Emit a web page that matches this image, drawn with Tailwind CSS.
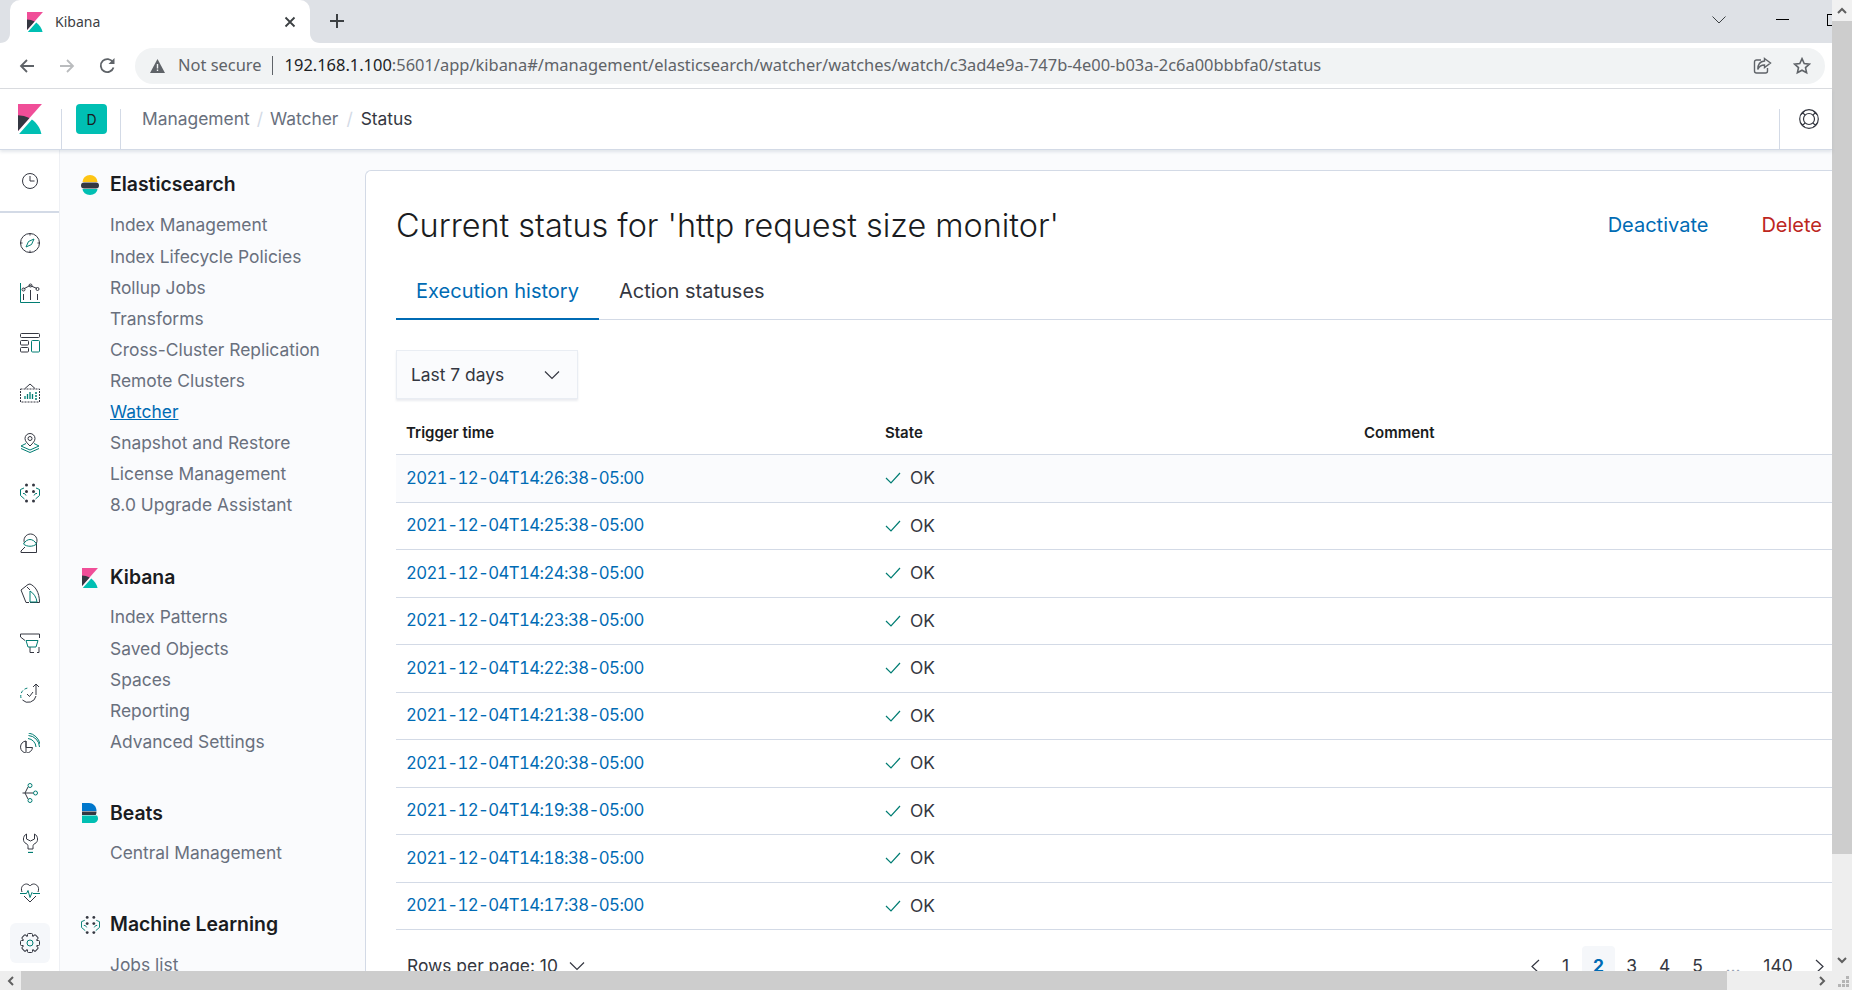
<!DOCTYPE html>
<html lang="en">
<head>
    <meta charset="UTF-8">
    <meta name="viewport" content="width=device-width, initial-scale=1.0">
    <title>Kibana</title>
    <script src="https://cdn.jsdelivr.net/npm/@tailwindcss/browser@4"></script>
</head>
<body class="h-screen overflow-hidden bg-white flex flex-col [font-family:Inter,sans-serif]">
    <div class="flex-1 min-h-0 flex">
        <div class="flex-1 min-w-0 flex flex-col">
            <!-- browser tabs -->
            <div class="h-[43px] shrink-0 bg-[#dee1e6] flex items-end [font-family:'Noto_Sans',sans-serif]">
                <svg class="w-[10px] h-[10px] shrink-0" viewBox="0 0 10 10"><path fill="#fff" d="M0 10C6 10 10 6 10 0V10Z"/></svg>
                <div class="w-[300px] h-[43px] shrink-0 bg-white rounded-t-[10px] flex items-center pl-[17px] pr-[13px]">
                    <svg class="w-[16px] h-[20px]" viewBox="4 0 25 32" preserveAspectRatio="none"><path fill="#F04E98" d="M4 0v28.789L28.935.017z"/><path fill="#343741" d="M4 12v16.789l11.906-13.738A24.721 24.721 0 0 0 4 12"/><path fill="#00BFB3" d="M18.479 16.664L6.268 30.754l-1.073 1.237h23.191c-1.252-6.292-4.883-11.719-9.908-15.327"/></svg>
                    <span class="ml-3 text-[14px] text-[#3c4043]">Kibana</span>
                    <svg class="ml-auto w-[14px] h-[14px]" viewBox="0 0 14 14" fill="none" stroke="#3c4043" stroke-width="1.8"><path d="M2.500 2.500l9 9M11.500 2.500l-9 9"/></svg>
                </div>
                <svg class="w-[10px] h-[10px] shrink-0" viewBox="0 0 10 10"><path fill="#fff" d="M10 10C4 10 0 6 0 0V10Z"/></svg>
                <svg class="ml-[9px] mb-[14px] w-[16px] h-[16px]" viewBox="0 0 16 16" fill="none" stroke="#3c4043" stroke-width="2"><path d="M8 1v14M1 8h14"/></svg>
                <div class="ml-auto h-full flex items-center">
                    <svg class="w-[14px] h-[8px] mb-1" viewBox="0 0 14 8" fill="none" stroke="#3c4043"><path d="M.5.5L7 7 13.500.5"/></svg>
                    <div class="ml-[50px] w-[13px] h-px bg-black mb-1"></div>
                    <div class="ml-[38px] w-[5px] h-[12px] border-l border-t border-b border-black mb-1"></div>
                </div>
            </div>
            <!-- browser toolbar -->
            <div class="h-[46px] shrink-0 bg-white border-b border-[#dadce0] flex items-center [font-family:'Noto_Sans',sans-serif]">
                <div class="w-[135px] shrink-0 flex items-center">
                    <svg class="ml-[19px] w-[16px] h-[16px]" viewBox="0 0 16 16" fill="none" stroke="#5f6368" stroke-width="1.8"><path d="M15 8H2M8 2L2 8l6 6"/></svg>
                    <svg class="ml-[24px] w-[16px] h-[16px]" viewBox="0 0 16 16" fill="none" stroke="#babcbe" stroke-width="1.8"><path d="M1 8h13M8 2l6 6-6 6"/></svg>
                    <svg class="ml-[24px] w-[17px] h-[17px]" viewBox="0 0 17 17" fill="none" stroke="#5f6368" stroke-width="1.8"><path d="M14.500 10.500a6.500 6.500 0 1 1-.6-5.200"/><path fill="#5f6368" stroke="none" d="M15.500 1v6h-6z"/></svg>
                </div>
                <div class="w-[1690px] h-[36px] bg-[#f1f3f4] rounded-full flex items-center text-[16.45px] pl-[15px] pr-[14px]">
                    <svg class="w-[15px] h-[14px] shrink-0" viewBox="0 0 15 14"><path fill="#5f6368" d="M7.500 0L15 14H0z"/><path stroke="#f1f3f4" stroke-width="1.400" d="M7.500 5v4.500M7.500 10.500V12"/></svg>
                    <span class="ml-[13px] text-[#5f6368]">Not secure</span>
                    <span class="ml-[10px] w-px h-[19px] bg-[#5f6368]"></span>
                    <span class="ml-[12px] text-[#202124]">192.168.1.100<span class="text-[#5f6368]">:5601/app/kibana#/management/elasticsearch/watcher/watches/watch/c3ad4e9a-747b-4e00-b03a-2c6a00bbbfa0/status</span></span>
                    <svg class="ml-auto w-[19px] h-[18px]" viewBox="0 0 19 18" fill="none" stroke="#5f6368" stroke-width="1.400"><path d="M8 3H3.500A2 2 0 0 0 1.500 5v9a2 2 0 0 0 2 2h9a2 2 0 0 0 2-2v-3"/><path d="M11.500 1.500L17.500 6l-6 4.500V8C8 8 6 9.500 4.800 12.500 4.800 8 7 4.300 11.500 4z"/></svg>
                    <svg class="ml-[21px] w-[18px] h-[18px]" viewBox="0 0 18 18" fill="none" stroke="#5f6368" stroke-width="1.600"><path d="M9 1.700l2.200 4.800 5.200.6-3.900 3.500 1.100 5.200L9 13.200l-4.600 2.600 1.100-5.200-3.900-3.500 5.200-.6z"/></svg>
                </div>
            </div>
            <!-- kibana header -->
            <div class="relative z-10 h-[61px] shrink-0 bg-white border-b border-[#d3dae6] shadow-[0_2px_3px_rgba(152,162,179,0.25)] flex">
                <div class="w-[61px] shrink-0 flex pl-[18px] pt-[15px]">
                    <svg class="w-[24px] h-[30px]" viewBox="4 0 25 32" preserveAspectRatio="none"><path fill="#F04E98" d="M4 0v28.789L28.935.017z"/><path fill="#343741" d="M4 12v16.789l11.906-13.738A24.721 24.721 0 0 0 4 12"/><path fill="#00BFB3" d="M18.479 16.664L6.268 30.754l-1.073 1.237h23.191c-1.252-6.292-4.883-11.719-9.908-15.327"/></svg>
                </div>
                <div class="mt-[20px] w-[60px] shrink-0 border-l border-r border-[#d3dae6] relative">
                    <div class="absolute left-[14px] -top-[5px] w-[31px] h-[30px] bg-[#00bfb3] rounded-[4px] flex items-center justify-center text-[14px] text-[#1a1c21]">D</div>
                </div>
                <div class="ml-[21px] flex items-center text-[17.4px] text-[#69707d]">
                    <span>Management</span><span class="mx-[7px] text-[#d3dae6]">/</span><span>Watcher</span><span class="mx-[8px] text-[#d3dae6]">/</span><span class="text-[#343741]">Status</span>
                </div>
                <div class="ml-auto mt-[20px] w-[53px] border-l border-[#d3dae6] relative">
                    <svg class="absolute left-[19px] top-0 w-[20px] h-[20px]" viewBox="0 0 20 20" fill="none" stroke="#343741" stroke-width="1.200"><circle cx="10" cy="10" r="9.300"/><circle cx="10" cy="10" r="5.500"/><path d="M3.500 3.500l2.600 2.600M16.500 3.500l-2.600 2.600M3.500 16.500l2.600-2.600M16.500 16.500l-2.600-2.600M5.500 2l-3.500 3.500M14.500 2l3.500 3.500M5.500 18l-3.500-3.500M14.500 18l3.500-3.500"/></svg>
                </div>
            </div>
            <!-- kibana body -->
            <div class="flex-1 min-h-0 flex overflow-hidden">
                <nav class="w-[60px] shrink-0 bg-white border-r border-[#eef0f4] flex flex-col items-center">
                    <div class="w-full h-[63px] shrink-0 flex items-center justify-center border-b-2 border-[#d3dae6]">
                        <svg class="w-5 h-5" viewBox="0 0 20 20" fill="none" stroke="#343741"><circle cx="10" cy="10" r="7.500"/><path d="M10 5v5h4.500"/></svg>
                    </div>
                    <div class="pt-[5px] flex flex-col w-full">
                        <div class="h-[50px] flex items-center justify-center">
                            <svg class="w-5 h-5" viewBox="0 0 20 20" fill="none" stroke="#343741"><circle cx="10" cy="10" r="9.500"/><path d="M10 .5v2M10 17.500v2M.5 10h2M17.500 10h2"/><path stroke="#017d73" d="M14 6l-2.500 5.500L6 14l2.500-5.500z"/></svg>
                        </div>
                        <div class="h-[50px] flex items-center justify-center">
                            <svg class="w-5 h-5" viewBox="0 0 20 20" fill="none" stroke="#343741"><path stroke="#017d73" d="M.5 0v19.500H20"/><path d="M3.500 6L10 2.500 17 5.500"/><circle cx="3.500" cy="6.500" r="1.500"/><circle cx="10.500" cy="2.500" r="1.500"/><circle cx="17.500" cy="6" r="1.500"/><path d="M3.500 11v6M10.500 7v10M17.500 11v6"/></svg>
                        </div>
                        <div class="h-[50px] flex items-center justify-center">
                            <svg class="w-5 h-5" viewBox="0 0 20 20" fill="none" stroke="#343741"><rect x=".5" y=".5" width="19" height="4" rx="1"/><rect x=".5" y="7.500" width="8" height="4.500" rx="1"/><rect x=".5" y="14.500" width="8" height="4.500" rx="1"/><rect x="11.500" y="7.500" width="8" height="11.500" rx="1" stroke="#017d73"/></svg>
                        </div>
                        <div class="h-[50px] flex items-center justify-center">
                            <svg class="w-5 h-5" viewBox="0 0 20 20" fill="none" stroke="#343741"><path stroke-dasharray="2 1" d="M.5 6h19v13H.5z"/><path d="M5 5.500L10 1l5 4.500"/><path stroke="#017d73" stroke-width="1.300" d="M5 16v-3M7.500 16v-5M10 16v-7M12.500 16v-5M15 10h2M15 13h2M15 16h2"/></svg>
                        </div>
                        <div class="h-[50px] flex items-center justify-center">
                            <svg class="w-5 h-5" viewBox="0 0 20 20" fill="none" stroke="#343741"><path d="M10 13C7 10 5 8 5 5.500a5 5 0 0 1 10 0C15 8 13 10 10 13z"/><circle cx="10" cy="5.500" r="2"/><path stroke="#017d73" d="M6 10.500L1 13l9 4 9-4-5-2.500M1 15.500l9 4 9-4"/></svg>
                        </div>
                        <div class="h-[50px] flex items-center justify-center">
                            <svg class="w-5 h-5" viewBox="0 0 20 20" fill="#343741"><circle cx="6.500" cy="2" r="1.500"/><circle cx="13.500" cy="2" r="1.500"/><circle cx="6.500" cy="8.500" r="1.500"/><circle cx="13.500" cy="8.500" r="1.500"/><circle cx="6.500" cy="18" r="1.500"/><circle cx="13.500" cy="18" r="1.500"/><path fill="none" stroke="#017d73" d="M4 5L.5 6.500v6l4 3.500M3 10.500h1.500l1.500 2M16 5l3.500 1.500v6l-4 3.500M17 10.500h-1.500l-1.500 2"/></svg>
                        </div>
                        <div class="h-[50px] flex items-center justify-center">
                            <svg class="w-5 h-5" viewBox="0 0 20 20" fill="none" stroke="#343741"><path d="M4.500 10a6.500 6.500 0 1 1 12 0v9.500H1v-1.500l4-4"/><path stroke="#017d73" d="M3.500 11C7 5 13 5 16.500 11 13 14 7 14 3.500 11z"/></svg>
                        </div>
                        <div class="h-[50px] flex items-center justify-center">
                            <svg class="w-5 h-5" viewBox="0 0 20 20" fill="none" stroke="#343741"><path d="M1 7l7-5.500 2-.5c5 2 9.500 8 9.500 18.500H10M1 7l5 12.500h3M7 4l3 3"/><path stroke="#017d73" d="M10 8v11h7C16.500 14.500 14 10.500 10 8z"/></svg>
                        </div>
                        <div class="h-[50px] flex items-center justify-center">
                            <svg class="w-5 h-5" viewBox="0 0 20 20" fill="none" stroke="#343741"><path d="M5 7.500L.5 4V1h19v4M10 14v5.500h4M19 14v5.500h-2"/><path stroke="#017d73" d="M6 7.500h12L16 14H8z"/></svg>
                        </div>
                        <div class="h-[50px] flex items-center justify-center">
                            <svg class="w-5 h-5" viewBox="0 0 20 20" fill="none" stroke="#343741"><path d="M16 13a8 8 0 0 1-13.500 4"/><path stroke="#017d73" stroke-dasharray="3 2" d="M1 15A8 8 0 0 1 9 5"/><path d="M7 11l2.500 2.500L13 9M16 12V1M13 4l3-3 3 3"/></svg>
                        </div>
                        <div class="h-[50px] flex items-center justify-center">
                            <svg class="w-5 h-5" viewBox="0 0 20 20" fill="none" stroke="#343741"><path d="M6 8A6 6 0 1 0 12.500 14.500H6z"/><path d="M6 8v11"/><path stroke="#017d73" d="M8 5.500a9 9 0 0 1 8 8.500M8.500 2.500A12 12 0 0 1 19.500 14M8.500 0A14 14 0 0 1 20 11"/></svg>
                        </div>
                        <div class="h-[50px] flex items-center justify-center">
                            <svg class="w-5 h-5" viewBox="0 0 20 20" fill="none" stroke="#017d73"><circle cx="10" cy="2.500" r="2"/><circle cx="15.500" cy="10" r="2"/><circle cx="10" cy="17.500" r="2"/><path stroke="#343741" d="M2.500 10h10.500M5 10l3-6M5 10l3 6"/></svg>
                        </div>
                        <div class="h-[50px] flex items-center justify-center">
                            <svg class="w-5 h-5" viewBox="0 0 20 20" fill="none" stroke="#343741"><path d="M6.500 1C2.500 3 2.500 9 6 10.500c1.500.7 2 1.500 2 3V16h5v-2.500c0-1.500.5-2.300 2-3C18.500 9 18.500 3 14.500 1v5L10.500 8 6.500 6z"/><path stroke="#017d73" stroke-width="1.300" d="M8 19.500h5"/></svg>
                        </div>
                        <div class="h-[50px] flex items-center justify-center">
                            <svg class="w-5 h-5" viewBox="0 0 20 20" fill="none" stroke="#343741"><path d="M2 9C0 4 3.500 1 6.500 1 8.500 1 10 3 10 3s1.500-2 3.500-2C16.500 1 20 4 18 9M4 13l6 6 6-6"/><path stroke="#017d73" d="M0 10.500h6.500l1.500-3 2 7 2-5 1 1H20"/></svg>
                        </div>
                        <div class="h-[40px] w-[40px] mx-[10px] mt-[5px] rounded-[6px] bg-[#f5f7fa] flex items-center justify-center">
                            <svg class="w-5 h-5" viewBox="0 0 20 20" fill="none" stroke="#343741"><rect x="7.500" y=".5" width="5" height="19" rx="1"/><rect x="7.500" y=".5" width="5" height="19" rx="1" transform="rotate(45 10 10)"/><rect x="7.500" y=".5" width="5" height="19" rx="1" transform="rotate(90 10 10)"/><rect x="7.500" y=".5" width="5" height="19" rx="1" transform="rotate(135 10 10)"/><circle cx="10" cy="10" r="7" fill="#f5f7fa" stroke="none"/><circle cx="10" cy="10" r="3" stroke="#017d73"/></svg>
                        </div>
                    </div>
                </nav>
                <aside class="w-[305px] shrink-0 bg-[#fafbfd] pl-[21px] pt-[19px] flex flex-col gap-[40px]">
                    <section class="mb-[1px]">
                        <h2 class="h-8 flex items-center text-[19.4px] font-semibold text-[#1a1c21]">
                            <svg class="w-[18px] h-[20px] mr-[11px]" viewBox="0 0 18 20"><path fill="#fec514" d="M1.500 7A7.500 7 0 0 1 16.500 7z"/><rect y="7.500" width="18" height="6" rx="3" fill="#343741"/><path fill="#00bfb3" d="M1.500 14h15A7.500 6 0 0 1 1.500 14z"/></svg>
                            Elasticsearch
                        </h2>
                        <ul class="mt-[9px] pl-[29px] text-[17.4px] text-[#69707d] [&>li]:h-[31.1px] [&>li]:flex [&>li]:items-center">
                            <li>Index Management</li>
                            <li>Index Lifecycle Policies</li>
                            <li>Rollup Jobs</li>
                            <li>Transforms</li>
                            <li>Cross-Cluster Replication</li>
                            <li>Remote Clusters</li>
                            <li class="text-[#006bb4] underline">Watcher</li>
                            <li>Snapshot and Restore</li>
                            <li>License Management</li>
                            <li>8.0 Upgrade Assistant</li>
                        </ul>
                    </section>
                    <section>
                        <h2 class="h-8 flex items-center text-[19.4px] font-semibold text-[#1a1c21]">
                            <svg class="ml-[1px] w-[16px] h-[20px] mr-[12px]" viewBox="4 0 25 32" preserveAspectRatio="none"><path fill="#F04E98" d="M4 0v28.789L28.935.017z"/><path fill="#343741" d="M4 12v16.789l11.906-13.738A24.721 24.721 0 0 0 4 12"/><path fill="#00BFB3" d="M18.479 16.664L6.268 30.754l-1.073 1.237h23.191c-1.252-6.292-4.883-11.719-9.908-15.327"/></svg>
                            Kibana
                        </h2>
                        <ul class="mt-[8px] pl-[29px] text-[17.4px] text-[#69707d] [&>li]:h-[31.1px] [&>li]:flex [&>li]:items-center">
                            <li>Index Patterns</li>
                            <li>Saved Objects</li>
                            <li>Spaces</li>
                            <li>Reporting</li>
                            <li>Advanced Settings</li>
                        </ul>
                    </section>
                    <section>
                        <h2 class="h-8 flex items-center text-[19.4px] font-semibold text-[#1a1c21]">
                            <svg class="ml-[1px] w-[16px] h-[20px] mr-[12px]" viewBox="0 0 16 20"><path fill="#0077cc" d="M0 0h7c4 0 7.500 3 7.500 8H0z"/><path fill="#343741" d="M0 8.500h14.500c0 .8-.2 2.500-.8 3.500H0z"/><path fill="#00bfb3" d="M0 12.500h15c.8 1.200 1 2.200 1 3 0 2.500-2 4.500-5 4.500H0z"/></svg>
                            Beats
                        </h2>
                        <ul class="mt-[8px] pl-[29px] text-[17.4px] text-[#69707d] [&>li]:h-[31.1px] [&>li]:flex [&>li]:items-center">
                            <li>Central Management</li>
                        </ul>
                    </section>
                    <section>
                        <h2 class="h-8 flex items-center text-[19.4px] font-semibold text-[#1a1c21]">
                            <svg class="w-[19px] h-5 mr-[10px]" viewBox="0 0 20 20" fill="#343741"><circle cx="6.500" cy="2" r="1.500"/><circle cx="13.500" cy="2" r="1.500"/><circle cx="6.500" cy="8.500" r="1.500"/><circle cx="13.500" cy="8.500" r="1.500"/><circle cx="6.500" cy="18" r="1.500"/><circle cx="13.500" cy="18" r="1.500"/><path fill="none" stroke="#017d73" d="M4 5L.5 6.500v6l4 3.500M3 10.500h1.500l1.500 2M16 5l3.500 1.500v6l-4 3.500M17 10.500h-1.500l-1.500 2"/></svg>
                            Machine Learning
                        </h2>
                        <ul class="mt-[9px] pl-[29px] text-[17.4px] text-[#69707d] [&>li]:h-[31.1px] [&>li]:flex [&>li]:items-center">
                            <li>Jobs list</li>
                        </ul>
                    </section>
                </aside>
                <main class="flex-1 min-w-0 bg-[#fafbfd] pt-[20px]">
                    <div class="h-[900px] bg-white border-l border-t border-[#d3dae6] rounded-tl-[6px] pl-[30px] pr-[10px]">
                        <div class="h-[40px] mt-[35px] flex items-center justify-between">
                            <h1 class="text-[32.4px] font-light text-[#1a1c21]">Current status for 'http request size monitor'</h1>
                            <div class="flex gap-[53px] pb-[2px] text-[20px]">
                                <span class="text-[#006bb4]">Deactivate</span>
                                <span class="text-[#bd271e]">Delete</span>
                            </div>
                        </div>
                        <div class="-mr-[10px] mt-[19px] h-[55px] flex border-b border-[#d3dae6] text-[20px] text-[#343741]">
                            <div class="w-[203px] h-[55px] pb-[2px] flex items-center justify-center border-b-2 border-[#006bb4] text-[#006bb4]">Execution history</div>
                            <div class="ml-[20px] h-[55px] pb-[4px] flex items-center">Action statuses</div>
                        </div>
                        <div class="mt-[30px] w-[182px] h-[49px] pt-[2px] bg-[#fafbfd] border border-[#e9edf3] shadow-[0_2px_2px_rgba(152,162,179,0.2)] flex items-center justify-between pl-[14px] pr-[17px] text-[17.4px] text-[#343741]">
                            Last 7 days
                            <svg class="w-[16px] h-[9px]" viewBox="0 0 16 9" fill="none" stroke="#343741" stroke-width="1.200"><path d="M1 .5l7 7 7-7"/></svg>
                        </div>
                        <div class="-mr-[10px] mt-[16px] h-[40px] pb-[2px] grid grid-cols-[489px_479px_1fr] items-center border-b border-[#d3dae6] text-[15px] font-semibold text-[#1a1c21]">
                            <span class="pl-[10px]">Trigger time</span><span>State</span><span>Comment</span>
                        </div>
                        <div id="rows" class="-mr-[10px]"></div>
                        <div class="-mr-[10px] h-[72px] flex items-center text-[17.4px] text-[#343741]">
                            <span class="pl-[11px]">Rows per page: 10</span>
                            <svg class="ml-[11px] w-[16px] h-[9px]" viewBox="0 0 16 9" fill="none" stroke="#343741" stroke-width="1.200"><path d="M1 .5l7 7 7-7"/></svg>
                            <div class="ml-auto flex items-center pr-[8px]">
                                <svg class="w-[9px] h-[15px] mr-[9px]" viewBox="0 0 9 15" fill="none" stroke="#343741" stroke-width="1.200"><path d="M8 1L1 7.500 8 14"/></svg>
                                <span class="w-[33px] h-[40px] flex items-center justify-center">1</span>
                                <span class="w-[33px] h-[40px] flex items-center justify-center rounded-[4px] bg-[#f5f7fa] text-[#006bb4] font-bold">2</span>
                                <span class="w-[33px] h-[40px] flex items-center justify-center">3</span>
                                <span class="w-[33px] h-[40px] flex items-center justify-center">4</span>
                                <span class="w-[33px] h-[40px] flex items-center justify-center">5</span>
                                <span class="w-[38px] h-[40px] flex items-center justify-center text-[#98a2b3]">...</span>
                                <span class="w-[52px] h-[40px] flex items-center justify-center">140</span>
                                <svg class="ml-[11px] w-[9px] h-[15px]" viewBox="0 0 9 15" fill="none" stroke="#343741" stroke-width="1.200"><path d="M1 1l7 6.500L1 14"/></svg>
                            </div>
                        </div>
                    </div>
                </main>
            </div>
        </div>
        <!-- vertical scrollbar -->
        <div class="w-5 shrink-0 bg-[#eeeeee] flex flex-col items-center">
            <div class="w-full h-[21px] bg-[#f1f1f1] flex items-center justify-center">
                <svg class="w-[10px] h-[7px]" viewBox="0 0 10 7" fill="none" stroke="#606060" stroke-width="2"><path d="M1 6l4-4 4 4"/></svg>
            </div>
            <div class="w-full h-[833px] bg-[#cdcdcd]"></div>
            <div class="mt-auto h-[21px] flex items-center justify-center">
                <svg class="w-[10px] h-[7px]" viewBox="0 0 10 7" fill="none" stroke="#606060" stroke-width="2"><path d="M1 1l4 4 4-4"/></svg>
            </div>
        </div>
    </div>
    <!-- horizontal scrollbar -->
    <div class="h-5 shrink-0 bg-[#eeeeee] flex items-center border-b border-white">
        <div class="w-[21px] h-full flex items-center justify-center">
            <svg class="w-[7px] h-[10px]" viewBox="0 0 7 10" fill="none" stroke="#606060" stroke-width="2"><path d="M6 1L2 5l4 4"/></svg>
        </div>
        <div class="w-[1706px] h-full bg-[#cdcdcd]"></div>
        <div class="ml-auto w-[20px] flex justify-center">
            <svg class="w-[7px] h-[10px]" viewBox="0 0 7 10" fill="none" stroke="#606060" stroke-width="2"><path d="M1 1l4 4-4 4"/></svg>
        </div>
        <div class="w-[20px] h-full flex items-end justify-end pr-[2px] pb-[2px]">
            <svg class="w-[12px] h-[12px]" viewBox="0 0 12 12" fill="#b5b5b5"><path d="M8 0h3v3H8zM4 4h3v3H4zM8 4h3v3H8zM0 8h3v3H0zM4 8h3v3H4zM8 8h3v3H8z"/></svg>
        </div>
    </div>
    <script>
        const minutes = [26, 25, 24, 23, 22, 21, 20, 19, 18, 17];
        document.getElementById("rows").innerHTML = minutes.map((minute, i) => `
            <div class="h-[47.5px] grid grid-cols-[489px_479px_1fr] items-center border-b border-[#d3dae6] text-[17.4px] ${i === 0 ? "bg-[#fafbfd]" : ""}">
                <span class="pl-[10px] text-[16.8px] tracking-[-0.6px] text-[#006bb4] tabular-nums">2021-12-04T14:${minute}:38-05:00</span>
                <span class="flex items-center text-[#343741]">
                    <svg class="w-[16px] h-[12px] mr-[9px]" viewBox="0 0 16 12" fill="none" stroke="#017d73" stroke-width="1.200"><path d="M1 6l5 5 9-10"/></svg>
                    OK
                </span>
                <span></span>
            </div>
        `).join("");
    </script>
</body>
</html>
